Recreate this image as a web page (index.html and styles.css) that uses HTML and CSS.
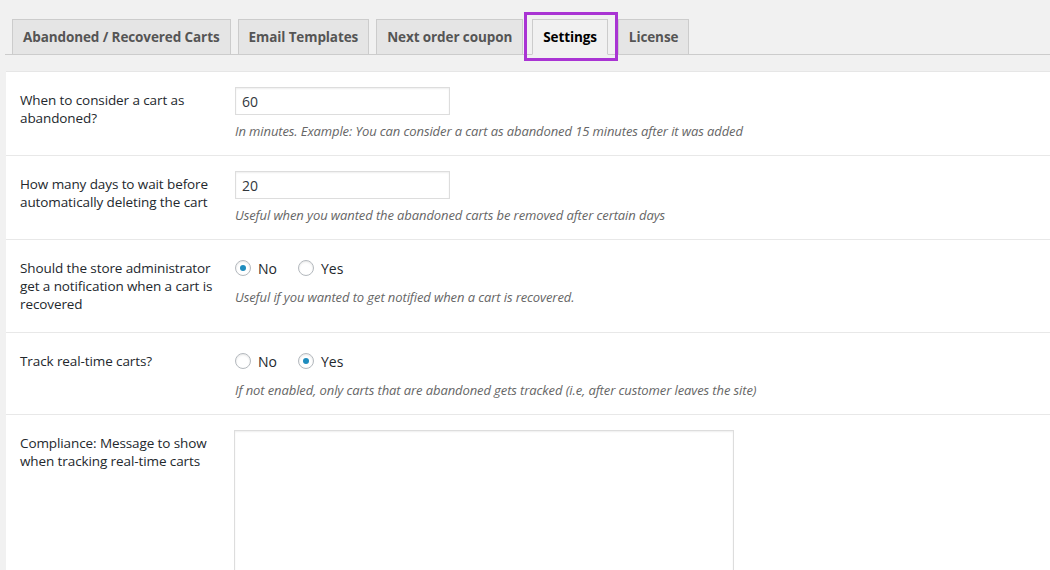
FILE: index.html
```html
<!DOCTYPE html>
<html lang="en">
<head>
  <meta charset="UTF-8">
  <title>Settings</title>
  <link rel="stylesheet" href="styles.css">
</head>
<body>
  <nav class="tabs">
    <a class="tab">Abandoned / Recovered Carts</a>
    <a class="tab">Email Templates</a>
    <a class="tab">Next order coupon</a>
    <a class="tab active">Settings</a>
    <a class="tab">License</a>
  </nav>

  <div class="panel">
    <div class="row">
      <div class="label">When to consider a cart as abandoned?</div>
      <div class="field">
        <input type="text" class="text-input" value="60">
        <p class="description">In minutes. Example: You can consider a cart as abandoned 15 minutes after it was added</p>
      </div>
    </div>

    <div class="row">
      <div class="label">How many days to wait before automatically deleting the cart</div>
      <div class="field">
        <input type="text" class="text-input" value="20">
        <p class="description">Useful when you wanted the abandoned carts be removed after certain days</p>
      </div>
    </div>

    <div class="row">
      <div class="label">Should the store administrator get a notification when a cart is recovered</div>
      <div class="field">
        <div class="radios">
          <label class="radio"><span class="dot checked"></span>No</label>
          <label class="radio"><span class="dot"></span>Yes</label>
        </div>
        <p class="description">Useful if you wanted to get notified when a cart is recovered.</p>
      </div>
    </div>

    <div class="row">
      <div class="label">Track real-time carts?</div>
      <div class="field">
        <div class="radios">
          <label class="radio"><span class="dot"></span>No</label>
          <label class="radio"><span class="dot checked"></span>Yes</label>
        </div>
        <p class="description">If not enabled, only carts that are abandoned gets tracked (i.e, after customer leaves the site)</p>
      </div>
    </div>

    <div class="row">
      <div class="label">Compliance: Message to show when tracking real-time carts</div>
      <div class="field">
        <textarea class="message-box"></textarea>
      </div>
    </div>
  </div>
</body>
</html>
```

FILE: styles.css
```css
body {
  margin: 0;
  padding: 19px 0 0 0;
  background: #f1f1f1;
  font-family: 'Open Sans', sans-serif;
  font-size: 14px;
  color: #23282d;
  overflow: hidden;
}
.tabs {
  display: flex;
  margin-left: 5px;
  border-bottom: 1px solid #ccc;
  height: 35px;
}
.tab {
  position: relative;
  margin-left: 7px;
  padding: 5px 10px;
  height: 24px;
  line-height: 24px;
  font-size: 13.5px;
  letter-spacing: -0.1px;
  font-weight: 700;
  color: #555;
  background: #e5e5e5;
  border: 1px solid #ccc;
  border-bottom: none;
  white-space: nowrap;
}
.tab.active {
  color: #000;
  background: #f1f1f1;
  border-bottom: 1px solid #f1f1f1;
  margin: 0 3px 0 9px;
}
/* highlight box around the active tab */
.tab.active::after {
  content: '';
  position: absolute;
  top: -8px;
  bottom: -7px;
  left: -9px;
  right: -11px;
  border: 3px solid #a934d3;
}
.panel {
  margin: 16px 0 0 6px;
  background: #fff;
  border-top: 1px solid #e6e6e6;
}
.row {
  display: flex;
  border-bottom: 1px solid #e8e8e8;
}
.label {
  flex: none;
  width: 202px;
  padding: 19px 3px 19px 14px;
  font-size: 13.5px;
  letter-spacing: -0.1px;
  line-height: 18px;
}
.field {
  padding: 15px 10px;
}
.text-input {
  display: block;
  box-sizing: border-box;
  width: 215px;
  height: 28px;
  margin: 0 0 7px 0;
  padding: 3px 6px;
  border: 1px solid #ddd;
  box-shadow: inset 0 1px 2px rgba(0,0,0,0.07);
  font-family: inherit;
  font-size: 14px;
  color: #32373c;
}
.description {
  margin: 0;
  font-size: 13px;
  line-height: 18px;
  font-style: italic;
  letter-spacing: -0.1px;
  color: #666;
}
.radios {
  display: flex;
  height: 26px;
  margin-bottom: 7px;
  align-items: center;
}
.radio {
  display: flex;
  align-items: center;
  margin-right: 21px;
}
.dot {
  box-sizing: border-box;
  width: 16px;
  height: 16px;
  margin-right: 7px;
  border: 1px solid #b4b9be;
  border-radius: 50%;
  background: #fff;
  box-shadow: inset 0 1px 2px rgba(0,0,0,0.1);
  display: flex;
  align-items: center;
  justify-content: center;
}
.dot.checked::before {
  content: '';
  width: 6px;
  height: 6px;
  border-radius: 50%;
  background: #1e8cbe;
}
.message-box {
  display: block;
  box-sizing: border-box;
  width: 500px;
  height: 200px;
  margin: 0 0 0 -1px;
  border: 1px solid #ddd;
  box-shadow: inset 0 1px 2px rgba(0,0,0,0.07);
  resize: none;
}
```
